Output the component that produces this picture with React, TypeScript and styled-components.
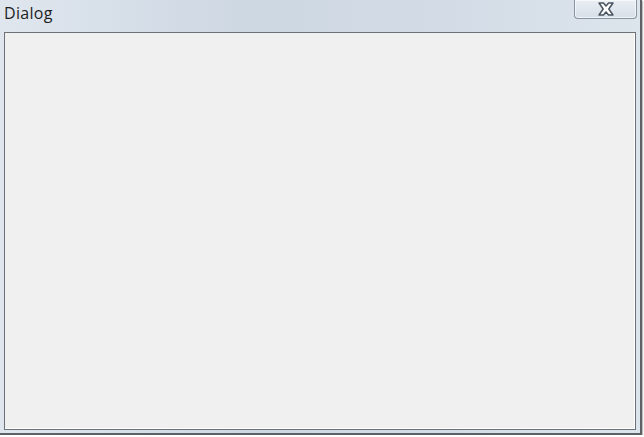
import styled, { createGlobalStyle } from "styled-components";

const GlobalStyle = createGlobalStyle`
  html, body {
    margin: 0;
    padding: 0;
    background: #ffffff;
  }
`;

const Window = styled.div`
  width: 640px;
  height: 433px;
  display: flex;
  flex-direction: column;
  background: linear-gradient(90deg, #dfe6ee 0%, #cdd7e2 40%, #d3dce6 70%, #dce4ec 100%);
  border-right: 2px solid #5d6166;
  border-bottom: 2px solid #5d6166;
  box-shadow: 1px 1px 1px rgba(0, 0, 0, 0.25);
`;

const TitleBar = styled.div`
  height: 32px;
  display: flex;
  align-items: flex-start;
  padding-left: 4px;
`;

const Title = styled.span`
  font-family: "Open Sans", "Noto Sans", sans-serif;
  font-size: 16px;
  color: #1e1e1e;
  margin-top: 2px;
  letter-spacing: 0.3px;
`;

const CloseButton = styled.div`
  margin-left: auto;
  margin-right: 3px;
  width: 61px;
  height: 18px;
  display: flex;
  align-items: center;
  justify-content: center;
  border: 1px solid #8893a1;
  border-top: none;
  border-radius: 0 0 4px 4px;
  background: linear-gradient(180deg, #e9eef3 0%, #d7dfe8 100%);
  box-shadow: inset 0 0 0 1px rgba(255, 255, 255, 0.6);
`;

const Client = styled.div`
  flex: 1;
  margin: 0 4px 3px 4px;
  border: 1px solid #6d7278;
  background: #f0f0f0;
  box-shadow: inset 0 -1px 0 #ffffff, inset -1px 0 0 #ffffff;
`;

function CloseGlyph() {
  return (
    <svg width="18" height="14" viewBox="0 0 18 14">
      <path
        d="M2 1h4.4L9 4l2.6-3H16l-4.2 6 4.2 6h-4.4L9 10l-2.6 3H2l4.2-6z"
        fill="#ffffff"
        stroke="#4a5461"
        strokeWidth="1.5"
        strokeLinejoin="round"
      />
    </svg>
  );
}

function App() {
  return (
    <>
      <GlobalStyle />
      <Window>
        <TitleBar>
          <Title>Dialog</Title>
          <CloseButton>
            <CloseGlyph />
          </CloseButton>
        </TitleBar>
        <Client />
      </Window>
    </>
  );
}

export default App;
